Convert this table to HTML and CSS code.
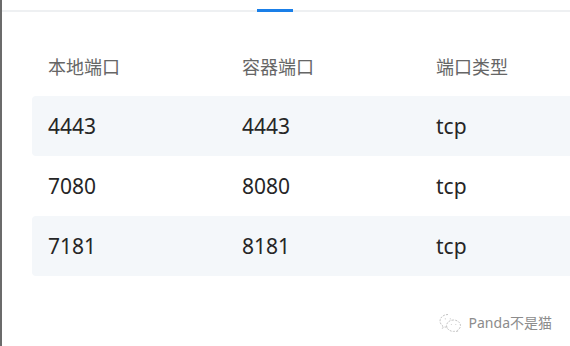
FILE: index.html
```html
<!DOCTYPE html>
<html lang="zh">
<head>
<meta charset="utf-8">
<title>端口映射</title>
<link rel="stylesheet" href="styles.css">
</head>
<body>
<div class="frame">
  <div class="tabs"><div class="tab-ink"></div></div>
  <div class="table">
    <div class="row head">
      <div class="cell">本地端口</div>
      <div class="cell">容器端口</div>
      <div class="cell">端口类型</div>
    </div>
    <div class="row stripe">
      <div class="cell">4443</div>
      <div class="cell">4443</div>
      <div class="cell">tcp</div>
    </div>
    <div class="row">
      <div class="cell">7080</div>
      <div class="cell">8080</div>
      <div class="cell">tcp</div>
    </div>
    <div class="row stripe">
      <div class="cell">7181</div>
      <div class="cell">8181</div>
      <div class="cell">tcp</div>
    </div>
  </div>
  <div class="mark">
    <svg class="mark-icon" width="26" height="20" viewBox="0 0 26 20" fill="none" stroke="#c4c4c4" stroke-width="1" stroke-dasharray="2 1.2">
      <path d="M10 2.5c-4.4 0-8 2.9-8 6.5 0 2 1.1 3.8 2.9 5l-.7 2.3 2.6-1.4c1 .3 2.1.5 3.2.5"/>
      <path d="M15.5 8c-3.9 0-7 2.6-7 5.7s3.1 5.7 7 5.7c.8 0 1.600-.1 2.4-.4l2.1 1.1-.5-1.8c1.8-1.1 3-2.8 3-4.6 0-3.1-3.1-5.7-7-5.7z"/>
      <circle cx="7.3" cy="6.8" r=".6" fill="#c4c4c4" stroke="none"/>
      <circle cx="12.3" cy="6.8" r=".6" fill="#c4c4c4" stroke="none"/>
      <circle cx="13.3" cy="12.5" r=".5" fill="#c4c4c4" stroke="none"/>
      <circle cx="17.8" cy="12.5" r=".5" fill="#c4c4c4" stroke="none"/>
    </svg>
    <span class="mark-text">Panda不是猫</span>
  </div>
</div>
</body>
</html>
```
FILE: styles.css
```css
html, body {
  margin: 0;
  padding: 0;
  background: #ffffff;
}
body {
  font-family: "Noto Sans", "Noto Sans CJK SC", sans-serif;
  width: 570px;
  height: 346px;
  overflow: hidden;
}
.frame {
  height: 346px;
  border-left: 2px solid #6b6b6b;
  overflow: hidden;
}
.tabs {
  height: 10px;
  border-bottom: 2px solid #eef0f2;
  display: flex;
  padding-left: 255px;
}
.tab-ink {
  width: 36px;
  height: 3px;
  margin-top: 9px;
  background: #1a7fe8;
}
.table {
  margin: 24px 0 0 30px;
  width: 600px;
}
.row {
  display: flex;
  height: 60px;
  align-items: center;
  border-radius: 4px;
}
.row.stripe {
  background: #f4f7fa;
}
.cell {
  width: 178px;
  padding-left: 16px;
  font-size: 21px;
  color: #262626;
  white-space: nowrap;
}
.head .cell {
  font-size: 18px;
  color: #666666;
}
.mark {
  display: flex;
  justify-content: flex-end;
  align-items: center;
  gap: 5px;
  padding-right: 18px;
  margin-top: 36px;
}
.mark-text {
  font-size: 14px;
  color: #8c8c8c;
}
```
